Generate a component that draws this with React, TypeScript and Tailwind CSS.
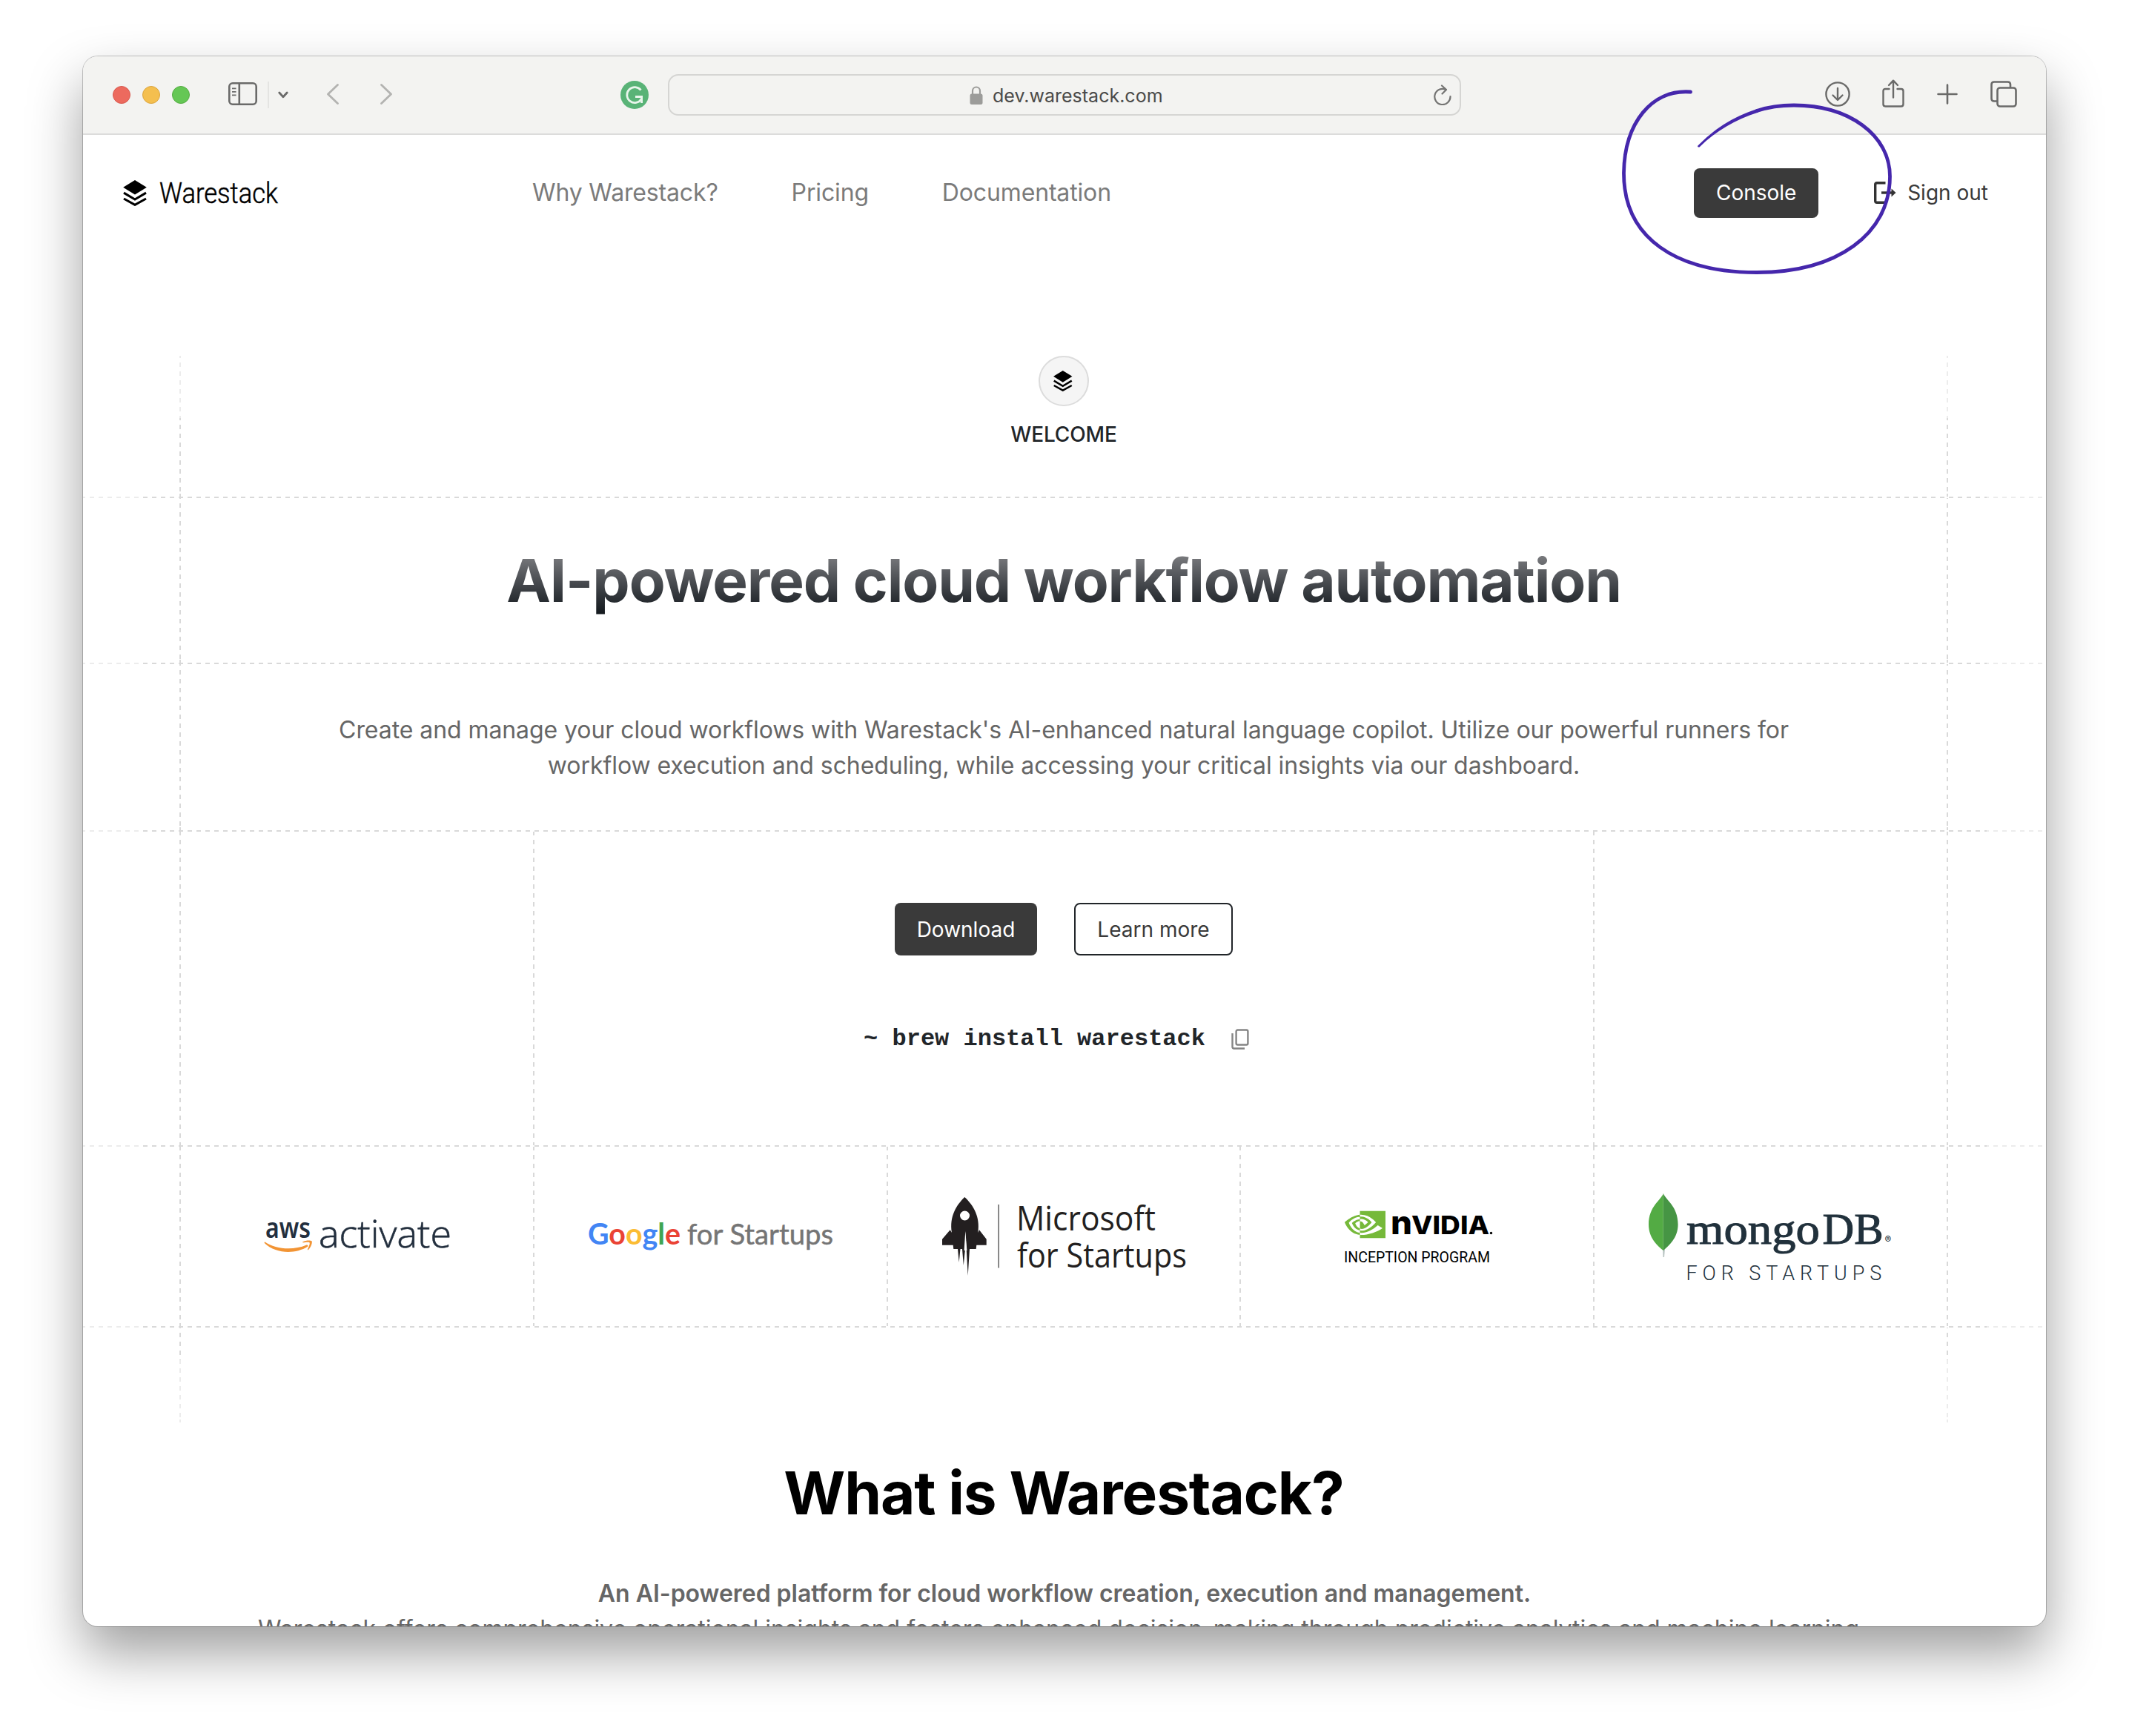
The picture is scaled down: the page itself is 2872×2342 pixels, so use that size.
import React from "react";
import { SiNvidia } from "react-icons/si";

function StackIcon({ className }: { className: string }) {
  return (
    <svg viewBox="0 0 76 84" className={className} fill="none" stroke="#000" strokeWidth="7.5">
      <path d="M38 0 76 23.5 38 47 0 23.5Z" fill="#000" stroke="none" />
      <path d="M2 41 38 62.500 74 41" />
      <path d="M2 60 38 80 74 60" />
    </svg>
  );
}

function HLine() {
  return (
    <div className="h-[2px] w-full shrink-0 bg-[repeating-linear-gradient(to_right,#d9d9d9_0_3px,transparent_3px_9px,#d9d9d9_9px_12px)] [mask-image:linear-gradient(to_right,rgba(0,0,0,0.5)_80px,#000_80px,#000_calc(100%-80px),rgba(0,0,0,0.5)_calc(100%-80px))]" />
  );
}

function VLine({ fade = "", phase = "" }: { fade?: string; phase?: string }) {
  return (
    <div
      className={`w-[2px] shrink-0 self-stretch border-b-4 border-[#d9d9d9] bg-[repeating-linear-gradient(to_bottom,#d9d9d9_0_1px,transparent_1px_7px,#d9d9d9_7px_12px)] [background-size:2px_12px] ${phase} ${fade}`}
    />
  );
}

function Row({ height, fade, phase, children }: { height: string; fade?: string; phase?: string; children?: React.ReactNode }) {
  return (
    <div className={`flex w-full shrink-0 ${height}`}>
      <div className="w-[130px] shrink-0" />
      <VLine fade={fade} phase={phase} />
      <div className="flex w-[2382px] shrink-0">{children}</div>
      <VLine fade={fade} phase={phase} />
    </div>
  );
}

function Toolbar() {
  return (
    <div className="flex h-[106px] shrink-0 items-center border-b-2 border-[#dcdcdb] bg-[#f3f3f1] pl-[40px]">
      <div className="flex gap-4">
        <div className="size-6 rounded-full border border-[#d8594f] bg-[#ec6a5e]" />
        <div className="size-6 rounded-full border border-[#dba53f] bg-[#f4bf4f]" />
        <div className="size-6 rounded-full border border-[#55ab43] bg-[#65c755]" />
      </div>
      <svg viewBox="0 0 39 31" className="mb-[3px] ml-[52px] h-[31px] w-[39px]" fill="none" stroke="#6a6a69" strokeWidth="2.6">
        <rect x="1.300" y="1.300" width="36.400" height="28.400" rx="4.500" />
        <path d="M14.800 1.500V29.500" />
        <path d="M5 8.300H10.500M5 12.800H10.500M5 17.300H10.500" strokeWidth="1.800" />
      </svg>
      <div className="ml-[14px] h-9 w-[2px] bg-[#e4e4e2]" />
      <svg viewBox="0 0 14 10" className="ml-[12px] h-[10px] w-[14px]" fill="none" stroke="#6a6a69" strokeWidth="2.800" strokeLinecap="round" strokeLinejoin="round">
        <path d="M1.800 2 7 7.800 12.200 2" />
      </svg>
      <svg viewBox="0 0 16 28" className="mb-[2px] ml-[52px] h-7 w-4" fill="none" stroke="#b3b3b1" strokeWidth="2.800" strokeLinecap="round" strokeLinejoin="round">
        <path d="M14.500 1.500 1.500 14 14.500 26.500" />
      </svg>
      <svg viewBox="0 0 16 28" className="mb-[2px] ml-[56px] h-7 w-4" fill="none" stroke="#b3b3b1" strokeWidth="2.800" strokeLinecap="round" strokeLinejoin="round">
        <path d="M1.500 1.500 14.500 14 1.500 26.500" />
      </svg>
      <svg viewBox="0 0 38 38" className="ml-[308px] size-[38px]" fill="none">
        <circle cx="19" cy="19" r="19" fill="#59b377" />
        <path d="M27.500 12.500A10.500 10.500 0 1 0 28.300 24.500" stroke="#e9f5ec" strokeWidth="2.800" />
        <path d="M20 21.500H28.600V30" stroke="#e9f5ec" strokeWidth="2.800" />
      </svg>
      <div className="ml-[26px] flex h-14 w-[1070px] shrink-0 items-center rounded-[14px] border-2 border-[#d5d5d3]">
        <svg viewBox="0 0 18 25" className="ml-[405px] h-[25px] w-[18px]" fill="none">
          <path d="M4 12V6.500a5 5 0 0 1 10 0V12" stroke="#9c9c9a" strokeWidth="2.200" />
          <rect x="0.500" y="10.500" width="17" height="14.500" rx="2.500" fill="#9c9c9a" />
        </svg>
        <div className="ml-[13px] pt-[2px] text-[25px] leading-[50px] whitespace-nowrap text-[#4b4b4a]">dev.warestack.com</div>
        <svg viewBox="0 0 24 28" className="mr-[11px] ml-auto h-7 w-6" fill="none" stroke="#747473" strokeWidth="2.200" strokeLinecap="round" strokeLinejoin="round">
          <path d="M22.500 16A10.600 10.600 0 1 1 16.500 6.900" />
          <path d="M11 1.500 17 7 11.500 12.500" />
        </svg>
      </div>
      <div className="mb-[2px] ml-[491px] flex items-center text-[#6a6a69]">
        <svg viewBox="0 0 34 34" className="size-[34px]" fill="none" stroke="currentColor" strokeWidth="2.400" strokeLinecap="round" strokeLinejoin="round">
          <circle cx="17" cy="17" r="15.600" />
          <path d="M17 9V24.500M10.500 18.500 17 25 23.500 18.500" />
        </svg>
        <svg viewBox="0 0 30 38" className="mb-[3px] ml-[43px] h-[38px] w-[30px]" fill="none" stroke="currentColor" strokeWidth="2.400" strokeLinecap="round" strokeLinejoin="round">
          <path d="M9.500 13H4.500Q1.500 13 1.500 16V33.500Q1.500 36.500 4.500 36.500H25.500Q28.500 36.500 28.500 33.500V16Q28.500 13 25.500 13H20.500" />
          <path d="M15 24.500V2M9 8 15 1.700 21 8" />
        </svg>
        <svg viewBox="0 0 28 28" className="ml-[44px] size-7" fill="none" stroke="currentColor" strokeWidth="2.600" strokeLinecap="round">
          <path d="M14 1.500V26.500M1.500 14H26.500" />
        </svg>
        <svg viewBox="0 0 36 36" className="ml-[44px] size-9" fill="none" stroke="currentColor" strokeWidth="2.600" strokeLinejoin="round">
          <path d="M9 27.500H5Q1.500 27.500 1.500 24V5Q1.500 1.500 5 1.500H23.500Q27 1.500 27 5V9" />
          <rect x="9.500" y="9.500" width="25" height="25" rx="3.500" />
        </svg>
      </div>
    </div>
  );
}

function Header() {
  return (
    <header className="flex h-[156px] shrink-0 items-center pr-[78px] pl-[54px]">
      <div className="flex w-[552px] items-center">
        <StackIcon className="h-[35px] w-8" />
        <svg viewBox="0 0 165 50" className="ml-[14px] h-[50px] w-[165px] overflow-visible font-['Roboto']">
          <text x="3" y="39" fontSize="38.500" fontWeight="300" fill="#000" stroke="#000" strokeWidth="0.500" textLength="160" lengthAdjust="spacingAndGlyphs">
            Warestack
          </text>
        </svg>
      </div>
      <nav className="flex gap-[99px] text-[32px] leading-[48px] tracking-[-0.15px] whitespace-nowrap text-[#7b7b7b]">
        <a>Why Warestack?</a>
        <a>Pricing</a>
        <a>Documentation</a>
      </nav>
      <div className="ml-auto flex items-center text-[28px] leading-[42px] whitespace-nowrap text-[#3a3a3a]">
        <button className="h-[67px] w-[168px] rounded-lg bg-[#3a3a3a] text-white">Console</button>
        <svg viewBox="0 0 30 30" className="ml-[75px] size-[30px]" fill="none" stroke="#333" strokeWidth="3.400">
          <path d="M15.500 1.700H4Q1.700 1.700 1.700 4V26Q1.700 28.300 4 28.300H15.500" />
          <path d="M10 15H25" />
          <path d="M23.500 9.500 29.500 15 23.500 20.500Z" fill="#333" stroke="none" />
        </svg>
        <span className="ml-[15px]">Sign out</span>
      </div>
    </header>
  );
}

function AwsLogo() {
  return (
    <svg viewBox="357 1608 250 120" className="h-[120px] w-[250px] overflow-visible">
      <text x="358" y="1670" fontSize="37" fontWeight="600" fill="#232f3e" textLength="61" lengthAdjust="spacingAndGlyphs" className="font-['Noto_Sans']">
        aws
      </text>
      <path d="M357.500 1675.500C371 1685 395 1687.500 413.500 1679.500C415 1679 416.300 1680.500 415 1681.800C398 1692.500 372 1691.500 357 1677.300C356.300 1676.200 356.800 1675.200 357.500 1675.500Z" fill="#f29434" />
      <path d="M408.500 1675.300C413 1672.700 419.500 1673.200 420.500 1674.300C421.600 1675.800 420 1682.500 416 1686C415.300 1686.600 414.600 1686.200 415 1685.400C416.200 1682.500 418.500 1677.700 417.600 1676.400C416.600 1675.200 411.500 1676 409 1676.300C408.100 1676.400 408 1675.700 408.500 1675.300Z" fill="#f29434" />
      <text x="430" y="1683" fontSize="52" fontWeight="300" fill="#232f3e" stroke="#232f3e" strokeWidth="0.600" textLength="179" lengthAdjust="spacingAndGlyphs" className="font-['Open_Sans']">
        activate
      </text>
    </svg>
  );
}

function GoogleLogo() {
  return (
    <svg viewBox="792 1608 334 120" className="h-[120px] w-[334px] overflow-visible font-['Lato']">
      <text x="793" y="1678.500" fontSize="41" fontWeight="700" textLength="125" lengthAdjust="spacingAndGlyphs">
        <tspan fill="#4285f4">G</tspan>
        <tspan fill="#ea4335">o</tspan>
        <tspan fill="#fbbc34">o</tspan>
        <tspan fill="#4285f4">g</tspan>
        <tspan fill="#3fa554">l</tspan>
        <tspan fill="#ea4335">e</tspan>
      </text>
      <text x="927" y="1678.500" fontSize="38" fill="#757575" stroke="#757575" strokeWidth="0.500" textLength="197" lengthAdjust="spacingAndGlyphs">
        for Startups
      </text>
    </svg>
  );
}

function MicrosoftLogo() {
  return (
    <svg viewBox="1270 1608 330 120" className="h-[120px] w-[330px] overflow-visible font-['Open_Sans']" fill="#231f20">
      <g transform="translate(1271 1615)">
        <path
          fillRule="evenodd"
          d="M30.300 0C19 11 9.500 26 13 48L10.700 44.300 0 56.700V64.700H14.700L15.300 70H21L22.700 88 24.500 70H27L28.800 92 31 70 31.300 46 32.700 70 34.700 106 37 70H45.700L46.300 64.700H59.700V56.700L50 44.300 48.300 48C51.500 26 42 11 30.300 0ZM30.500 18.500A6.500 6.500 0 1 0 30.500 31.500A6.500 6.500 0 1 0 30.500 18.500Z"
        />
        <path d="M31.300 46 29.600 72H33.400Z" fill="#fff" />
      </g>
      <rect x="1346.500" y="1625" width="1.400" height="85.500" fill="#555" />
      <text x="1371" y="1660" fontSize="45" textLength="188" lengthAdjust="spacingAndGlyphs">
        Microsoft
      </text>
      <text x="1372" y="1709.500" fontSize="45" textLength="229" lengthAdjust="spacingAndGlyphs">
        for Startups
      </text>
    </svg>
  );
}

function NvidiaLogo() {
  return (
    <svg viewBox="1814 1608 198 120" className="h-[120px] w-[198px] overflow-visible">
      <SiNvidia x="1815" y="1624.500" size={55} color="#76b93a" />
      <text x="1877" y="1665" fontSize="44" fontWeight="800" className="font-['Inter']" textLength="29" lengthAdjust="spacingAndGlyphs">
        n
      </text>
      <text x="1905" y="1665" fontSize="33.500" fontWeight="800" className="font-['Inter']" textLength="105" lengthAdjust="spacingAndGlyphs">
        VIDIA
      </text>
      <circle cx="2012.500" cy="1663.500" r="1.700" />
      <text x="1814" y="1703" fontSize="20.500" className="font-['Roboto']" textLength="197" lengthAdjust="spacingAndGlyphs">
        INCEPTION PROGRAM
      </text>
    </svg>
  );
}

function MongoLogo() {
  return (
    <svg viewBox="2224 1608 330 120" className="h-[120px] w-[330px] overflow-visible" fill="#21313c">
      <path d="M2243 1684 2243.500 1696H2245L2246 1684Z" fill="#b8c4c2" />
      <path d="M2243.800 1610C2241 1619 2224 1627 2224 1652C2224 1670 2236 1681 2243.800 1687Z" fill="#53ab44" />
      <path d="M2243.800 1610C2247 1619 2263.600 1627 2263.600 1652C2263.600 1670 2251 1681 2243.800 1687Z" fill="#469544" />
      <g className="font-['Liberation_Serif']" fontSize="59.500" stroke="#21313c" strokeWidth="1">
        <text x="2275" y="1678" textLength="180" lengthAdjust="spacingAndGlyphs">
          mongo
        </text>
        <text x="2458.500" y="1678" textLength="82" lengthAdjust="spacingAndGlyphs">
          DB
        </text>
      </g>
      <text x="2542.500" y="1677" fontSize="13" className="font-['Inter']">
        ®
      </text>
      <text x="2274.500" y="1727" fontSize="27" fontWeight="300" letterSpacing="5.300" textLength="269" className="font-['Roboto']">
        FOR STARTUPS
      </text>
    </svg>
  );
}

function Hero() {
  return (
    <section className="mt-[142px] flex flex-col">
      <Row height="h-[190px]" phase="[background-position:0_2px]" fade="[mask-image:linear-gradient(to_bottom,rgba(0,0,0,0.5)_84px,#000_84px)]">
        <div className="flex w-full flex-col items-center">
          <div className="flex size-[68px] items-center justify-center rounded-full border-2 border-[#dcdcdc] bg-[#f5f5f5]">
            <StackIcon className="mr-[2px] h-[28px] w-[25.5px]" />
          </div>
          <div className="mt-[17px] text-[28px] leading-[42px] font-medium tracking-[-0.15px] text-[#212529]">WELCOME</div>
        </div>
      </Row>
      <HLine />
      <Row height="h-[222px]">
        <h1 className="m-auto bg-linear-to-b from-[#8f8f92] to-[#11161b] bg-clip-text text-[80px] leading-[96px] font-bold tracking-[-1.15px] whitespace-nowrap text-transparent">
          AI-powered cloud workflow automation
        </h1>
      </Row>
      <HLine />
      <Row height="h-[224px]" phase="[background-position:0_1px]">
        <p className="m-auto w-[2100px] pt-[2px] text-center text-[32px] leading-[48px] tracking-[-0.07px] text-[#666]">
          Create and manage your cloud workflows with Warestack's AI-enhanced natural language copilot. Utilize our powerful runners for
          <br />
          workflow execution and scheduling, while accessing your critical insights via our dashboard.
        </p>
      </Row>
      <HLine />
      <Row height="h-[423px]" phase="[background-position:0_4px]">
        <div className="w-[475px]" />
        <VLine phase="[background-position:0_4px]" />
        <div className="flex w-[1428px] flex-col items-center pt-[96px]">
          <div className="flex gap-[50px] text-[28px] leading-[42px]">
            <button className="h-[71px] w-[192px] rounded-lg bg-[#3a3a3a] text-white">Download</button>
            <button className="h-[71px] w-[214px] rounded-lg border-2 border-[#212529] bg-white text-[#3a3a3a]">Learn more</button>
          </div>
          <div className="mt-[88px] mr-[20px] flex items-center">
            <code className="pt-px font-['Liberation_Mono',monospace] text-[32px] leading-[48px] font-bold whitespace-pre text-[#212529]">
              ~ brew install warestack
            </code>
            <svg viewBox="0 0 24 28" className="ml-[35px] h-7 w-6" fill="none" stroke="#858585" strokeWidth="2.400">
              <rect x="6.600" y="1.500" width="15.800" height="20" rx="2" />
              <path d="M1.500 6V24.300Q1.500 26.500 3.700 26.500H18" />
            </svg>
          </div>
        </div>
        <VLine phase="[background-position:0_4px]" />
      </Row>
      <HLine />
      <Row height="h-[242px]" phase="[background-position:0_4px]">
        <div className="flex w-[475px] items-center justify-center"><AwsLogo /></div>
        <VLine phase="[background-position:0_4px]" />
        <div className="flex w-[475px] items-center justify-center"><GoogleLogo /></div>
        <VLine phase="[background-position:0_4px]" />
        <div className="flex w-[474px] items-center justify-center"><MicrosoftLogo /></div>
        <VLine phase="[background-position:0_4px]" />
        <div className="flex w-[475px] items-center justify-center"><NvidiaLogo /></div>
        <VLine phase="[background-position:0_4px]" />
        <div className="flex w-[475px] items-center justify-center"><MongoLogo /></div>
      </Row>
      <HLine />
      <Row height="h-[128px]" fade="[mask-image:linear-gradient(to_bottom,#000_44px,rgba(0,0,0,0.5)_44px)]" />
    </section>
  );
}

function MarkerCircle() {
  return (
    <svg viewBox="2180 110 380 270" className="pointer-events-none absolute top-[34px] left-[2068px] h-[270px] w-[380px]" fill="none" stroke="#4527ac" strokeWidth="4.800" strokeLinecap="round">
      <path d="M2280.500 124C2228 120 2191.500 166 2190.500 233C2190 322 2262 367.500 2370 367.500C2478 367.500 2549.500 316 2549.500 238C2549.500 182 2494 142 2420 142C2400 142 2385 144.500 2370 149.500" />
      <path d="M2371 146.800C2336 158 2312 175 2290 197Q2290 199 2292.500 198.500C2316 176 2340 162 2372 151.600Z" fill="#4527ac" stroke="none" />
    </svg>
  );
}

export default function App() {
  return (
    <div className="h-[2342px] w-[2872px] overflow-hidden bg-white pt-[76px] pl-[112px] font-['Inter',sans-serif]">
      <div className="relative flex h-[2118px] w-[2648px] flex-col overflow-hidden rounded-[20px] bg-white shadow-[0_0_0_1px_rgba(0,0,0,0.22),0_36px_72px_rgba(0,0,0,0.38)]">
        <Toolbar />
        <Header />
        <Hero />
        <section className="mt-[47px] flex flex-col items-center whitespace-nowrap">
          <h2 className="mr-[2px] text-[80px] leading-[96px] font-bold tracking-[-1.1px] text-black">What is Warestack?</h2>
          <div className="mt-[64px] text-center text-[32px] leading-[48px] tracking-[-0.03px] text-[#666]">
            <p className="font-semibold">An AI-powered platform for cloud workflow creation, execution and management.</p>
            <p className="mr-4">
              Warestack offers comprehensive operational insights and fosters enhanced decision-making through predictive analytics and machine learning
            </p>
          </div>
        </section>
        <MarkerCircle />
      </div>
    </div>
  );
}
